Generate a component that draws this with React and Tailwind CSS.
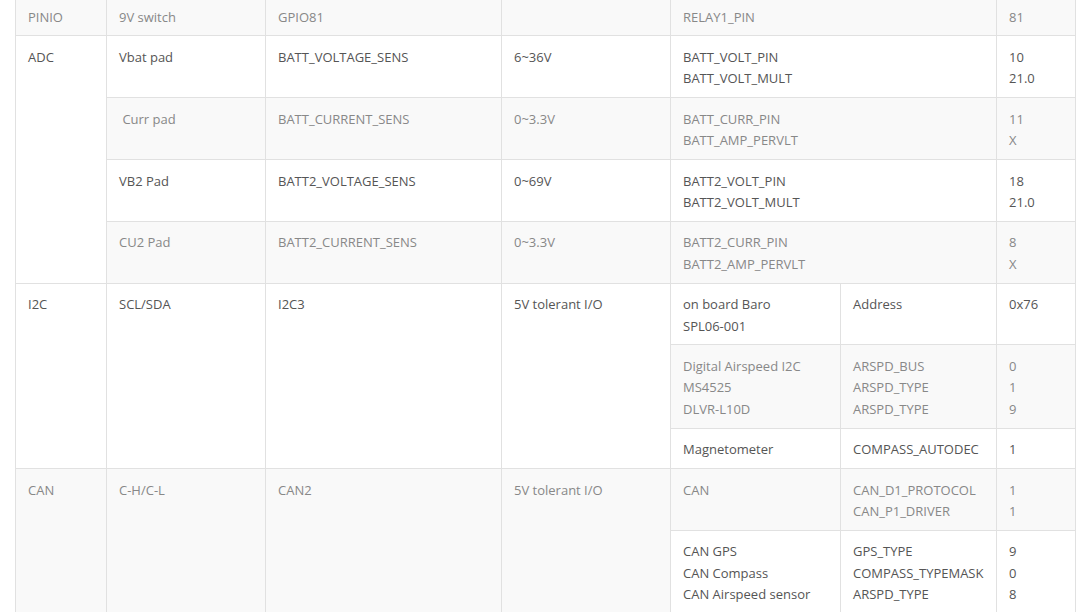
const Td = ({ children, rowSpan, colSpan, light }) => (
  <td
    rowSpan={rowSpan}
    colSpan={colSpan}
    className={`border border-[#e1e1e1] px-[12px] pt-[10.5px] pb-[7.5px] align-top ${
      light ? "text-[#888]" : "text-[#555]"
    }`}
  >
    {children}
  </td>
);

const App = () => {
  return (
    <div
      className="h-[612px] w-[1088px] overflow-hidden bg-white"
      style={{ fontFamily: '"Open Sans", "Liberation Sans", sans-serif' }}
    >
      <table className="-mt-[5px] ml-[15px] w-[1060px] table-fixed border-collapse text-[13px] leading-[21.4px]">
        <colgroup>
          <col className="w-[91px]" />
          <col className="w-[159px]" />
          <col className="w-[236px]" />
          <col className="w-[169px]" />
          <col className="w-[170px]" />
          <col className="w-[156px]" />
          <col className="w-[79px]" />
        </colgroup>
        <tbody>
          <tr className="bg-[#f9f9f9]">
            <Td light>PINIO</Td>
            <Td light>9V switch</Td>
            <Td light>GPIO81</Td>
            <Td light></Td>
            <Td light colSpan={2}>RELAY1_PIN</Td>
            <Td light>81</Td>
          </tr>
          <tr className="bg-white">
            <Td rowSpan={4}>ADC</Td>
            <Td>Vbat pad</Td>
            <Td>BATT_VOLTAGE_SENS</Td>
            <Td>6~36V</Td>
            <Td colSpan={2}>
              BATT_VOLT_PIN
              <br />
              BATT_VOLT_MULT
            </Td>
            <Td>
              10
              <br />
              21.0
            </Td>
          </tr>
          <tr className="bg-[#f9f9f9]">
            <Td light>{"\u00a0Curr pad"}</Td>
            <Td light>BATT_CURRENT_SENS</Td>
            <Td light>0~3.3V</Td>
            <Td light colSpan={2}>
              BATT_CURR_PIN
              <br />
              BATT_AMP_PERVLT
            </Td>
            <Td light>
              11
              <br />X
            </Td>
          </tr>
          <tr className="bg-white">
            <Td>VB2 Pad</Td>
            <Td>BATT2_VOLTAGE_SENS</Td>
            <Td>0~69V</Td>
            <Td colSpan={2}>
              BATT2_VOLT_PIN
              <br />
              BATT2_VOLT_MULT
            </Td>
            <Td>
              18
              <br />
              21.0
            </Td>
          </tr>
          <tr className="bg-[#f9f9f9]">
            <Td light>CU2 Pad</Td>
            <Td light>BATT2_CURRENT_SENS</Td>
            <Td light>0~3.3V</Td>
            <Td light colSpan={2}>
              BATT2_CURR_PIN
              <br />
              BATT2_AMP_PERVLT
            </Td>
            <Td light>
              8
              <br />X
            </Td>
          </tr>
          <tr className="bg-white">
            <Td rowSpan={3}>I2C</Td>
            <Td rowSpan={3}>SCL/SDA</Td>
            <Td rowSpan={3}>I2C3</Td>
            <Td rowSpan={3}>5V tolerant I/O</Td>
            <Td>
              on board Baro
              <br />
              SPL06-001
            </Td>
            <Td>Address</Td>
            <Td>0x76</Td>
          </tr>
          <tr className="bg-[#f9f9f9]">
            <Td light>
              Digital Airspeed I2C
              <br />
              MS4525
              <br />
              DLVR-L10D
            </Td>
            <Td light>
              ARSPD_BUS
              <br />
              ARSPD_TYPE
              <br />
              ARSPD_TYPE
            </Td>
            <Td light>
              0
              <br />1
              <br />9
            </Td>
          </tr>
          <tr className="bg-white">
            <Td>Magnetometer</Td>
            <Td>COMPASS_AUTODEC</Td>
            <Td>1</Td>
          </tr>
          <tr className="bg-[#f9f9f9]">
            <Td light rowSpan={2}>CAN</Td>
            <Td light rowSpan={2}>C-H/C-L</Td>
            <Td light rowSpan={2}>CAN2</Td>
            <Td light rowSpan={2}>5V tolerant I/O</Td>
            <Td light>CAN</Td>
            <Td light>
              CAN_D1_PROTOCOL
              <br />
              CAN_P1_DRIVER
            </Td>
            <Td light>
              1
              <br />1
            </Td>
          </tr>
          <tr className="bg-white">
            <Td>
              CAN GPS
              <br />
              CAN Compass
              <br />
              CAN Airspeed sensor
            </Td>
            <Td>
              GPS_TYPE
              <br />
              COMPASS_TYPEMASK
              <br />
              ARSPD_TYPE
            </Td>
            <Td>
              9
              <br />0
              <br />8
            </Td>
          </tr>
        </tbody>
      </table>
    </div>
  );
};

export default App;
